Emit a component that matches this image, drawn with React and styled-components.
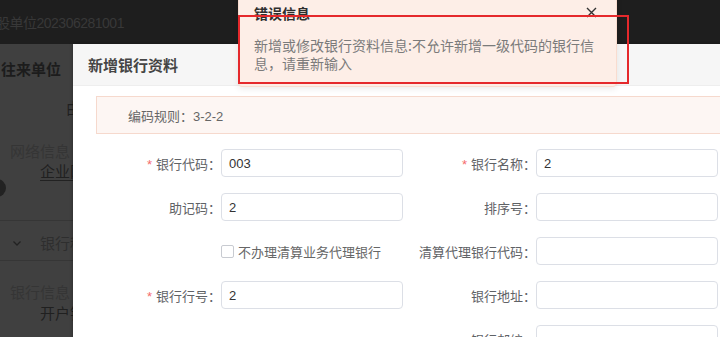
import React from "react";
import styled, { createGlobalStyle } from "styled-components";

const Global = createGlobalStyle`
  html, body { margin: 0; padding: 0; }
  body {
    font-family: "Liberation Sans", "Noto Sans CJK SC", sans-serif;
    background: #404040;
  }
  * { box-sizing: border-box; }
`;

const Screen = styled.div`
  position: relative;
  width: 720px;
  height: 337px;
  overflow: hidden;
  background: #404040;
`;

/* ---------- dimmed page behind the dialog ---------- */
const TopBar = styled.div`
  height: 44px;
  background: #1e1e1e;
  display: flex;
  align-items: center;
`;

const TopTitle = styled.span`
  margin-left: -4px;
  font-size: 14px;
  color: #383838;
  letter-spacing: -0.5px;
  white-space: nowrap;
`;

const PageBody = styled.div`
  display: flex;
  flex-direction: column;
`;

const PageTitle = styled.div`
  height: 48px;
  display: flex;
  align-items: center;
  padding-left: 1px;
  font-size: 15px;
  font-weight: 700;
  color: #1c1c1c;
`;

const FieldRow = styled.div`
  height: ${(p) => p.$h || 22}px;
  display: flex;
  align-items: center;
  padding-left: ${(p) => p.$indent || 0}px;
  padding-top: ${(p) => p.$pt || 0}px;
  font-size: 15px;
  color: ${(p) => p.$color || "#202020"};
  white-space: nowrap;
`;

const Underlined = styled.span`
  border-bottom: 1px solid #222;
  line-height: 17px;
`;

const Radio = styled.span`
  width: 18px;
  height: 18px;
  border-radius: 50%;
  background: #222;
  margin-left: -12px;
  margin-top: -6px;
`;

const Divider = styled.div`
  height: 1px;
  background: #363636;
  margin-top: ${(p) => p.$mt || 0}px;
`;

const Chevron = styled.svg`
  width: 10px;
  height: 10px;
  margin-left: 12px;
  margin-right: 18px;
`;

/* ---------- dialog ---------- */
const Dialog = styled.div`
  position: absolute;
  left: 73px;
  top: 44px;
  width: 720px;
  height: 360px;
  background: #fff;
  box-shadow: -1px 0 3px rgba(0, 0, 0, 0.25);
  display: flex;
  flex-direction: column;
`;

const DialogHeader = styled.div`
  height: 42px;
  background: #f6f6f6;
  border-bottom: 1px solid #eeeeee;
  display: flex;
  align-items: center;
  padding-left: 15px;
  font-size: 15px;
  font-weight: 700;
  color: #454545;
  font-family: "Noto Sans CJK SC", sans-serif;
`;

const DialogBody = styled.div`
  padding: 10px 0 0 23px;
  display: flex;
  flex-direction: column;
`;

const Notice = styled.div`
  height: 38px;
  background: #fdf6f3;
  border: 1px solid #f6d9cd;
  display: flex;
  align-items: center;
  padding-left: 31px;
  font-size: 13px;
  color: #666;
`;

const Form = styled.div`
  margin-top: 15px;
  display: grid;
  grid-template-columns: 307px 307px;
  column-gap: 8px;
  row-gap: 16px;
`;

const Item = styled.div`
  height: 28px;
  display: flex;
  align-items: center;
`;

const Label = styled.label`
  width: 125px;
  flex-shrink: 0;
  text-align: right;
  font-size: 13px;
  color: #5f6266;
  white-space: nowrap;
  &::before {
    content: ${(p) => (p.$required ? '"*"' : '""')};
    color: #f56c6c;
    margin-right: 4px;
  }
`;

const Input = styled.div`
  width: 182px;
  height: 28px;
  flex-shrink: 0;
  border: 1px solid #dcdfe6;
  border-radius: 4px;
  display: flex;
  align-items: center;
  padding: 0 7px;
  font-size: 13px;
  color: #333;
`;

const Spacer = styled.div`
  width: 125px;
  flex-shrink: 0;
`;

const CheckBox = styled.span`
  width: 13px;
  height: 13px;
  border: 1px solid #c8cbd1;
  border-radius: 2px;
  background: #fff;
  margin-right: 4px;
  flex-shrink: 0;
`;

const CheckText = styled.span`
  font-size: 13px;
  color: #666;
  white-space: nowrap;
`;

/* ---------- error toast ---------- */
const Toast = styled.div`
  position: absolute;
  left: 238px;
  top: -6px;
  width: 379px;
  height: 93px;
  background: #fdeee7;
  border: 1px solid #f9dccf;
  border-radius: 4px;
  box-shadow: 0 2px 6px rgba(0, 0, 0, 0.08);
  padding: 9px 15px 0 15px;
  display: flex;
  flex-direction: column;
  font-family: "Noto Sans CJK SC", sans-serif;
`;

const ToastHead = styled.div`
  height: 18px;
  display: flex;
  align-items: center;
  justify-content: space-between;
`;

const ToastTitle = styled.span`
  font-size: 14px;
  font-weight: 700;
  color: #2f2f2f;
`;

const Close = styled.svg`
  width: 11px;
  height: 11px;
  margin-right: 4px;
  margin-top: -2px;
`;

const ToastMsg = styled.div`
  margin-top: 14px;
  width: 346px;
  font-size: 14px;
  line-height: 18px;
  color: #7b7b7b;
`;

const Highlight = styled.div`
  position: absolute;
  left: 238px;
  top: 15px;
  width: 391px;
  height: 69px;
  border: 2px solid #e5292c;
  pointer-events: none;
`;

const fields = [
  { label: "银行代码：", value: "003", required: true },
  { label: "银行名称：", value: "2", required: true },
  { label: "助记码：", value: "2" },
  { label: "排序号：", value: "" },
  { checkbox: "不办理清算业务代理银行" },
  { label: "清算代理银行代码：", value: "" },
  { label: "银行行号：", value: "2", required: true },
  { label: "银行地址：", value: "" },
  { empty: true },
  { label: "银行邮编：", value: "" },
];

export default function App() {
  return (
    <Screen>
      <Global />
      <TopBar>
        <TopTitle>股单位202306281001</TopTitle>
      </TopBar>
      <PageBody>
        <PageTitle>往来单位</PageTitle>
        <FieldRow $h={30} $indent={66}>由</FieldRow>
        <FieldRow $h={18} />
        <FieldRow $h={20} $indent={10} $color="#353535">网络信息</FieldRow>
        <FieldRow $h={24} $indent={40}>
          <Underlined>企业网</Underlined>
        </FieldRow>
        <FieldRow $h={14}>
          <Radio />
        </FieldRow>
        <Divider $mt={22} />
        <FieldRow $h={39} $pt={4} $color="#2e2e2e">
          <Chevron viewBox="0 0 10 10">
            <path d="M1.5 3.5 L5 7 L8.5 3.5" fill="none" stroke="#222" strokeWidth="1.3" />
          </Chevron>
          银行种
        </FieldRow>
        <Divider />
        <FieldRow $h={20} />
        <FieldRow $h={20} $indent={10} $color="#353535">银行信息</FieldRow>
        <FieldRow $h={22} $indent={40}>开户银</FieldRow>
      </PageBody>

      <Dialog>
        <DialogHeader>新增银行资料</DialogHeader>
        <DialogBody>
          <Notice>编码规则：3-2-2</Notice>
          <Form>
            {fields.map((f, i) => {
              if (f.empty) return <Item key={i} />;
              if (f.checkbox)
                return (
                  <Item key={i}>
                    <Spacer />
                    <CheckBox />
                    <CheckText>{f.checkbox}</CheckText>
                  </Item>
                );
              return (
                <Item key={i}>
                  <Label $required={f.required}>{f.label}</Label>
                  <Input>{f.value}</Input>
                </Item>
              );
            })}
          </Form>
        </DialogBody>
      </Dialog>

      <Toast>
        <ToastHead>
          <ToastTitle>错误信息</ToastTitle>
          <Close viewBox="0 0 11 11">
            <path d="M1 1 L10 10 M10 1 L1 10" stroke="#333" strokeWidth="1.4" />
          </Close>
        </ToastHead>
        <ToastMsg>新增或修改银行资料信息:不允许新增一级代码的银行信息，请重新输入</ToastMsg>
      </Toast>
      <Highlight />
    </Screen>
  );
}
